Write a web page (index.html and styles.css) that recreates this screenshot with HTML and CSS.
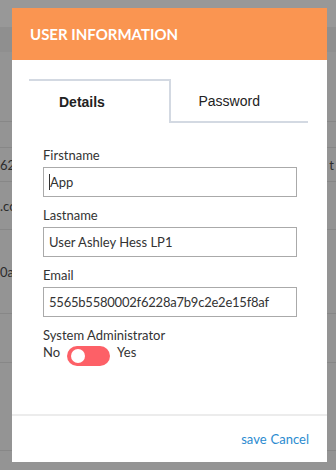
FILE: index.html
```html
<!DOCTYPE html>
<html lang="en">
<head>
    <meta charset="UTF-8">
    <title>User Information</title>
    <link rel="stylesheet" href="styles.css">
</head>
<body>
    <!-- Page behind the modal -->
    <div class="backdrop">
        <div class="bd-top"></div>
        <div class="bd-head"></div>
        <div class="bd-row" style="height: 70px"></div>
        <div class="bd-row" style="height: 26px"></div>
        <div class="bd-row" style="height: 34px"><span class="bd-left">62</span><span class="bd-right">t</span></div>
        <div class="bd-row" style="height: 48px"><span class="bd-left">.co</span></div>
        <div class="bd-row" style="height: 84px"><span class="bd-left">0a</span></div>
        <div class="bd-row" style="height: 49px"></div>
        <div class="bd-row" style="height: 88px"></div>
        <div class="bd-foot"></div>
    </div>

    <!-- Modal -->
    <div class="modal">
        <div class="modal-header">USER INFORMATION</div>
        <div class="modal-body">
            <div class="tabs">
                <div class="tab active">Details</div>
                <div class="tab">Password</div>
            </div>
            <form class="user-form">
                <label class="field-label">Firstname</label>
                <div class="field-input"><span class="caret"></span>App</div>
                <label class="field-label">Lastname</label>
                <div class="field-input">User Ashley Hess LP1</div>
                <label class="field-label">Email</label>
                <div class="field-input tight">5565b5580002f6228a7b9c2e2e15f8af</div>
                <label class="field-label">System Administrator</label>
                <div class="switch-row">
                    <span>No</span>
                    <span class="switch"><span class="knob"></span></span>
                    <span>Yes</span>
                </div>
            </form>
        </div>
        <div class="modal-footer">
            <a href="#" class="footer-link">save</a>
            <a href="#" class="footer-link">Cancel</a>
        </div>
    </div>
</body>
</html>
```

FILE: styles.css
```css
/* Global */
* {
    margin: 0;
    padding: 0;
    box-sizing: border-box;
}

body {
    width: 336px;
    height: 470px;
    overflow: hidden;
    background: #949494;
    font-family: 'Lato', sans-serif;
    color: #333333;
}

/* Backdrop page */
.backdrop {
    display: flex;
    flex-direction: column;
}

.bd-top {
    height: 27px;
    background: #989898;
}

.bd-head {
    height: 25px;
    background: #8f8f8f;
}

.bd-row {
    border-bottom: 1px solid #878787;
    font-size: 13px;
    color: #2c2c2c;
    display: flex;
    align-items: center;
    justify-content: space-between;
}

.bd-right {
    margin-right: 2px;
}

.bd-foot {
    flex: 1;
    height: 40px;
    background: #8d8d8d;
}

/* Modal */
.modal {
    position: absolute;
    left: 12px;
    top: 8px;
    width: 315px;
    height: 454px;
    background: #ffffff;
    display: flex;
    flex-direction: column;
}

.modal-header {
    height: 52px;
    background: #fa9551;
    color: #ffffff;
    font-weight: 700;
    font-size: 15px;
    padding-left: 18px;
    display: flex;
    align-items: center;
}

.modal-body {
    flex: 1;
    padding: 19px 19px 0 17px;
}

/* Tabs */
.tabs {
    display: flex;
    height: 44px;
}

.tab {
    width: 140px;
    display: flex;
    align-items: center;
    padding-left: 28px;
    font-family: 'Liberation Sans', Arial, sans-serif;
    font-size: 14px;
    color: #222222;
    border-bottom: 2px solid #d3d9e2;
    border-left: 2px solid #d3d9e2;
    padding-top: 1px;
}

.tab.active {
    font-weight: 700;
    border: none;
    border-top: 2px solid #d3d9e2;
    padding-left: 30px;
    padding-top: 0;
}

/* Form */
.user-form {
    padding: 24px 0 0 14px;
    display: flex;
    flex-direction: column;
}

.field-label {
    font-size: 13px;
    line-height: 16px;
    color: #333333;
    margin-bottom: 4px;
}

.field-input {
    width: 254px;
    height: 30px;
    border: 1px solid #aaaaaa;
    font-size: 13px;
    color: #333333;
    padding-left: 5px;
    display: flex;
    align-items: center;
    margin-bottom: 10px;
}

.field-input.tight {
    letter-spacing: -0.22px;
}

.caret {
    width: 1px;
    height: 16px;
    background: #333333;
}

.switch-row {
    display: flex;
    align-items: flex-start;
    gap: 7px;
    font-size: 13px;
    line-height: 16px;
    margin-top: -3px;
}

.switch {
    position: relative;
    width: 43px;
    height: 20px;
    border-radius: 10px;
    background: #fd6067;
    margin-top: 2px;
}

.knob {
    position: absolute;
    left: 4px;
    top: 3px;
    width: 14px;
    height: 14px;
    border-radius: 50%;
    background: #ffffff;
}

/* Footer */
.modal-footer {
    height: 48px;
    border-top: 2px solid #ececec;
    display: flex;
    justify-content: flex-end;
    align-items: center;
    gap: 4px;
    padding-right: 18px;
}

.footer-link {
    color: #2b8bd0;
    text-decoration: none;
    font-size: 13px;
}
```
